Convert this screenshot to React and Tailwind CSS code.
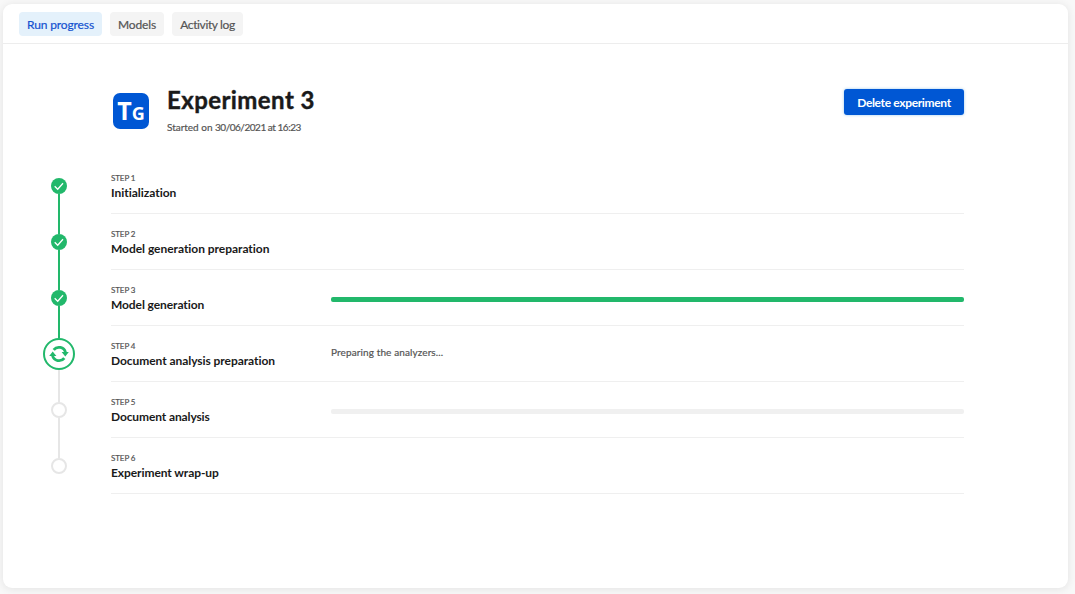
import React from "react";

const steps = [
  { title: "Initialization", state: "done", tracking: "tracking-[-0.02px]" },
  { title: "Model generation preparation", state: "done", tracking: "tracking-[-0.04px]" },
  { title: "Model generation", state: "done", bar: "bg-[#22b86b]", tracking: "tracking-[-0.09px]" },
  { title: "Document analysis preparation", state: "active", note: "Preparing the analyzers...", tracking: "tracking-[-0.06px]" },
  { title: "Document analysis", state: "todo", bar: "bg-[#f0f0f0]", tracking: "tracking-[-0.12px]" },
  { title: "Experiment wrap-up", state: "todo", tracking: "tracking-[-0.08px]" },
];

function Node({ state }) {
  if (state === "done")
    return (
      <svg className="size-4 shrink-0" viewBox="0 0 16 16" fill="none">
        <circle cx="8" cy="8" r="8" fill="#22b86b" />
        <path d="M3.7 8.3 6.7 11.2 12 5.3" stroke="#fff" strokeWidth="1.3" />
      </svg>
    );
  if (state === "active")
    return (
      <svg className="size-8 shrink-0" viewBox="-16 -16 32 32" fill="none">
        <circle r="15" stroke="#22b86b" strokeWidth="2" />
        <path d="M-5.3-4.1A6.7 6.7 0 0 1 6.5-1.5M5.3 4.1A6.7 6.7 0 0 1-6.5 1.5" stroke="#22b86b" strokeWidth="2.8" />
        <path d="M2.6-1.9H9.8L6.3 2.4ZM-2.6 1.9H-9.8L-6.3-2.4Z" fill="#22b86b" />
      </svg>
    );
  return <div className="size-4 shrink-0 rounded-full border-2 border-[#e6e6e6] bg-white" />;
}

function Step({ step, index }) {
  const top = index === 0 ? "bg-transparent" : step.state === "todo" ? "bg-[#e6e6e6]" : "bg-[#22b86b]";
  const bottom =
    index === steps.length - 1 ? "bg-transparent" : step.state === "done" ? "bg-[#22b86b]" : "bg-[#e6e6e6]";
  return (
    <li className="flex h-14 gap-9">
      <div className="flex w-8 flex-col items-center">
        <div className={`w-0.5 flex-1 ${top}`} />
        <Node state={step.state} />
        <div className={`w-0.5 flex-1 ${bottom}`} />
      </div>
      <div className="flex w-[853px] border-b border-[#efefef]">
        <div className="w-[220px] whitespace-nowrap pt-[15px]">
          <div className="text-[8px] leading-[10px] tracking-[-0.1px] text-[#555] [-webkit-text-stroke:0.2px]">STEP {index + 1}</div>
          <div className={`mt-[2px] text-[12px] font-bold leading-4 text-[#1a1a1a] ${step.tracking}`}>{step.title}</div>
        </div>
        <div className="flex-1">
          {step.bar && <div className={`mt-[27px] h-[5px] rounded-[2px] ${step.bar}`} />}
          {step.note && (
            <div className="mt-[18px] text-[10px] leading-4 tracking-[0.11px] text-[#555] [-webkit-text-stroke:0.2px]">{step.note}</div>
          )}
        </div>
      </div>
    </li>
  );
}

export default function App() {
  return (
    <div className="h-[594px] w-[1075px] overflow-hidden bg-[#f8f8f8] pl-[3px] pt-1 font-['Lato',sans-serif]">
      <main className="h-[584px] w-[1065px] rounded-[9px] bg-white shadow-[0_1px_8px_rgba(0,0,0,0.09)]">
        <nav className="flex h-10 gap-2 whitespace-nowrap border-b border-[#ededed] pl-4 pt-2 text-[12px] text-[#555] [-webkit-text-stroke:0.2px]">
          <button className="h-6 w-[83px] rounded bg-[#e4f1fb] pt-0.5 tracking-[-0.12px] text-[#1552d0]">Run progress</button>
          <button className="h-6 w-[54px] rounded bg-[#f4f4f4] pt-0.5 tracking-[-0.16px]">Models</button>
          <button className="h-6 w-[71px] rounded bg-[#f4f4f4] pt-0.5 tracking-[-0.38px]">Activity log</button>
        </nav>
        <header className="flex h-[114px] w-[961px] pl-[110px] pt-[45px]">
          <div className="mt-1 flex size-9 items-baseline justify-center rounded-[7px] bg-[#0057d4] font-['Open_Sans',sans-serif] font-bold text-white">
            <span className="text-[25px] leading-[34px]">T</span>
            <span className="text-[18px] leading-[34px]">G</span>
          </div>
          <div className="ml-[18px] whitespace-nowrap">
            <h1 className="mt-[-5px] text-[24px] font-bold leading-8 tracking-[0.42px] text-[#1a1a1a] [-webkit-text-stroke:0.4px]">
              Experiment 3
            </h1>
            <p className="mt-[3px] text-[10px] leading-4 tracking-[-0.47px] text-[#555] [-webkit-text-stroke:0.2px]">
              <span className="tracking-[-0.02px]">Started on </span>30/06/2021 at 16:23
            </p>
          </div>
          <button className="ml-auto h-[26px] w-[120px] whitespace-nowrap rounded-[3px] bg-[#0057d4] pt-0.5 text-[12px] font-bold tracking-[-0.35px] text-white shadow-[0_0_3px_rgba(0,120,212,0.4)]">
            Delete experiment
          </button>
        </header>
        <ol className="pl-10">
          {steps.map((step, i) => (
            <Step key={step.title} step={step} index={i} />
          ))}
        </ol>
      </main>
    </div>
  );
}
